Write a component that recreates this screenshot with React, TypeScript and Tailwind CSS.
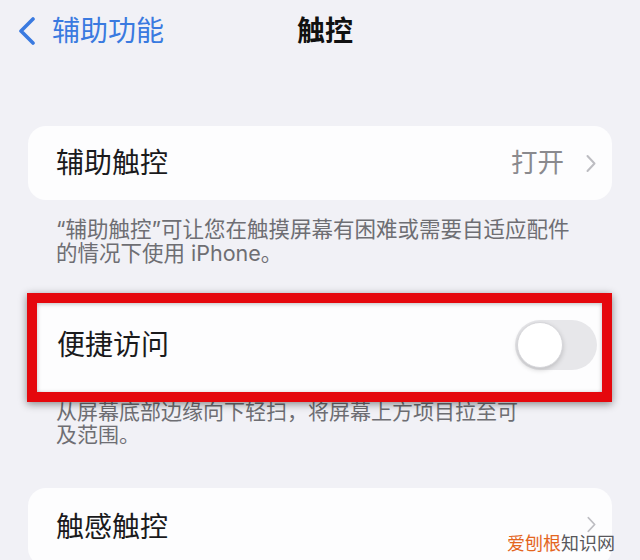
import { useState } from "react"

const font = "font-['Inter','Noto_Sans_CJK_SC',sans-serif]"

function Chevron({ className }: { className?: string }) {
  return (
    <svg viewBox="0 0 10 18" className={className} fill="none">
      <path d="M1.5 1.5 8.5 9l-7 7.5" stroke="currentColor" strokeWidth="2" strokeLinecap="round" strokeLinejoin="round" />
    </svg>
  )
}

function Toggle({ on, onChange }: { on: boolean; onChange: () => void }) {
  return (
    <button
      onClick={onChange}
      className={`flex w-[82px] h-[50px] rounded-full p-[2px] ${on ? "bg-[#34c759] justify-end" : "bg-[#e7e7ea] justify-start"}`}
    >
      <span className="block w-[46px] h-[46px] rounded-full bg-white border border-[#d6d6da] shadow-[0_2px_5px_rgba(0,0,0,0.18)]" />
    </button>
  )
}

export default function App() {
  const [reach, setReach] = useState(false)

  return (
    <div className={`relative w-[640px] h-[560px] overflow-hidden bg-[#f1f1f6] ${font}`}>
      {/* nav bar */}
      <div className="grid grid-cols-[1fr_auto_1fr] items-center h-[62px]">
        <div className="flex items-center pl-[18px] text-[#3a7ae0]">
          <svg viewBox="0 0 18 28" className="w-[18px] h-[28px]" fill="none">
            <path d="M15 2 3 14l12 12" stroke="currentColor" strokeWidth="3.6" strokeLinecap="round" strokeLinejoin="round" />
          </svg>
          <span className="ml-[16px] text-[28px] leading-none">辅助功能</span>
        </div>
        <h1 className="pl-[10px] text-[28px] font-bold leading-none text-[#111]">触控</h1>
        <div />
      </div>

      {/* assistive touch */}
      <div className="mx-[28px] mt-[64px] h-[74px] rounded-[18px] bg-[#fdfdfe] flex items-center pl-[28px] pr-[16px]">
        <span className="flex-1 text-[28px] text-[#1a1a1c]">辅助触控</span>
        <span className="text-[26.5px] text-[#8a8a8e]">打开</span>
        <Chevron className="ml-[22px] w-[10px] h-[19px] text-[#bdbdc2]" />
      </div>
      <div className="px-[56px] pt-[17px] text-[21.5px] leading-[24px] text-[#6e6e73] whitespace-nowrap">
        <p>“辅助触控”可让您在触摸屏幕有困难或需要自适应配件</p>
        <p>的情况下使用 iPhone。</p>
      </div>

      {/* reachability */}
      <div className="relative mx-[28px] mt-[33px]">
        <div className="h-[94px] rounded-[18px] bg-[#fdfdfe] flex items-center pl-[29px] pr-[15px]">
          <span className="flex-1 text-[28px] text-[#1a1a1c]">便捷访问</span>
          <Toggle on={reach} onChange={() => setReach(!reach)} />
        </div>
        <div className="absolute -top-[5px] -bottom-[10px] -left-[1px] right-0 border-[10px] border-[#e5080d] shadow-[0_2px_8px_rgba(0,0,0,0.45),inset_0_1px_4px_rgba(0,0,0,0.25)] pointer-events-none" />
      </div>
      <div className="px-[56px] pt-[8px] text-[21px] leading-[23px] text-[#6e6e73] whitespace-nowrap">
        <p>从屏幕底部边缘向下轻扫，将屏幕上方项目拉至可</p>
        <p>及范围。</p>
      </div>

      {/* haptic touch */}
      <div className="mx-[28px] mt-[42px] h-[78px] rounded-[18px] bg-[#fdfdfe] flex items-center pl-[28px] pr-[16px]">
        <span className="flex-1 text-[28px] text-[#1a1a1c]">触感触控</span>
        <Chevron className="-mt-[6px] w-[9px] h-[17px] text-[#bdbdc2]" />
      </div>

      <div className="absolute left-[507px] top-[532px] text-[18px] leading-[20px] whitespace-nowrap font-['Noto_Sans_CJK_SC',sans-serif]">
        <span className="text-[#e4661f]">爱刨根</span>
        <span className="text-[#58585c]">知识网</span>
      </div>
    </div>
  )
}
